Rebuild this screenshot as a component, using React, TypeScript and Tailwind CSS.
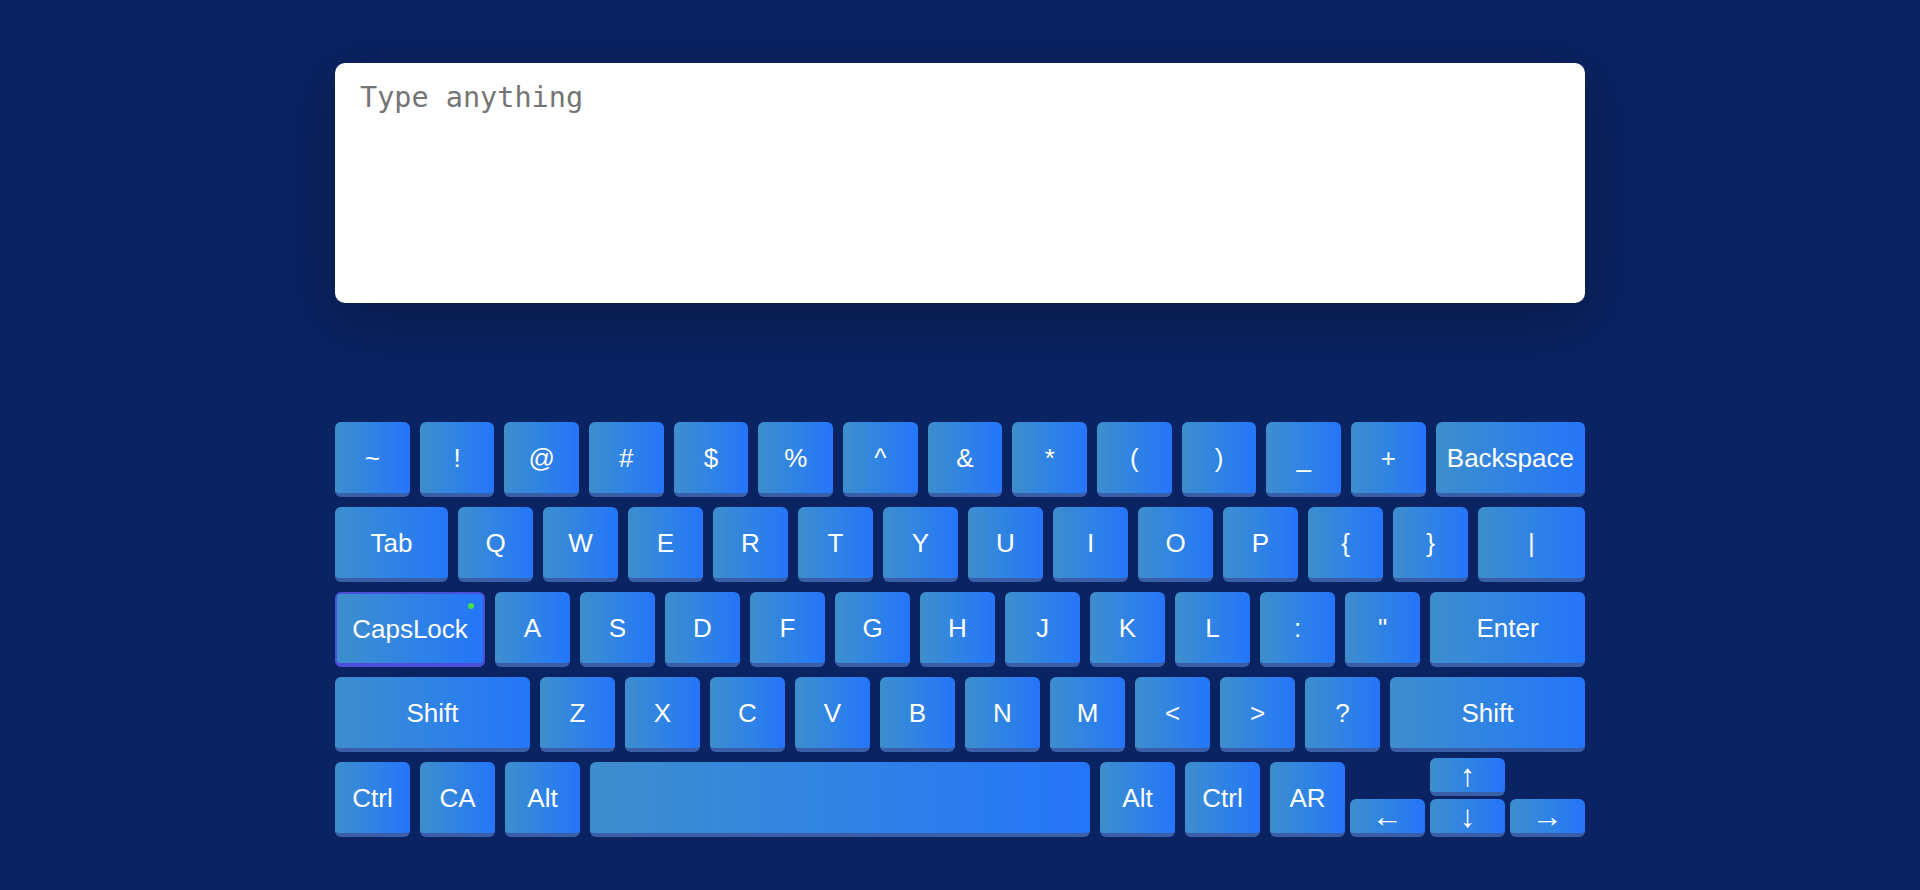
import React from "react";
import clsx from "clsx";

type KeyProps = {
  label: string;
  w?: string;
  h?: string;
  text?: string;
  active?: boolean;
  fixed?: boolean;
};

const Key: React.FC<KeyProps> = ({ label, w = "w-[75px]", h = "h-[75px]", text = "text-[26px]", active, fixed }) => {
  return (
    <div
      className={clsx(
        "relative flex items-center justify-center rounded-[6px] bg-linear-to-r from-[#3e8ecd] to-[#2575fa] leading-none text-white select-none",
        fixed ? "shrink-0" : "shrink",
        w,
        h,
        text,
        active ? "border-2 border-b-4 border-[#4b50d9]" : "border-b-4 border-[#3a5ea8]"
      )}
    >
      {label}
      {active && <span className="absolute top-[9px] right-[9px] h-[6px] w-[6px] rounded-full bg-[#44e04a]" />}
    </div>
  );
};

const row1 = ["~", "!", "@", "#", "$", "%", "^", "&", "*", "(", ")", "_", "+"];
const row2 = ["Q", "W", "E", "R", "T", "Y", "U", "I", "O", "P", "{", "}"];
const row3 = ["A", "S", "D", "F", "G", "H", "J", "K", "L", ":", '"'];
const row4 = ["Z", "X", "C", "V", "B", "N", "M", "<", ">", "?"];

const App: React.FC = () => {
  return (
    <div className="min-h-screen bg-[#0a2362] pt-[63px] font-['Liberation_Sans',Arial,sans-serif]">
      <div className="mx-auto w-[1250px]">
        {/* Text area */}
        <textarea
          placeholder="Type anything"
          className="block h-[240px] w-full resize-none rounded-[10px] bg-white px-[25px] pt-[14px] font-['DejaVu_Sans_Mono',monospace] text-[28.5px] text-[#333] outline-none placeholder:text-[#757575] shadow-[0_15px_60px_rgba(0,0,0,0.28)]"
        />

        {/* Keyboard */}
        <div className="mt-[119px] flex flex-col gap-[10px]">
          <div className="flex gap-[10px]">
            {row1.map((k) => (
              <Key key={k} label={k} />
            ))}
            <Key label="Backspace" w="w-[150px]" />
          </div>

          <div className="flex gap-[10px]">
            <Key label="Tab" w="w-[113px]" />
            {row2.map((k) => (
              <Key key={k} label={k} />
            ))}
            <Key label="|" w="flex-1" />
          </div>

          <div className="flex gap-[10px]">
            <Key label="CapsLock" w="w-[150px]" active />
            {row3.map((k) => (
              <Key key={k} label={k} />
            ))}
            <Key label="Enter" w="flex-1" />
          </div>

          <div className="flex gap-[10px]">
            <Key label="Shift" w="w-[195px]" />
            {row4.map((k) => (
              <Key key={k} label={k} />
            ))}
            <Key label="Shift" w="flex-1" />
          </div>

          <div className="flex h-[75px] items-end gap-[10px]">
            <Key label="Ctrl" />
            <Key label="CA" />
            <Key label="Alt" />
            <Key label="" w="w-[500px]" />
            <Key label="Alt" />
            <Key label="Ctrl" />
            <Key label="AR" />
            {/* Arrow cluster: up arrow sticks out a little above the row */}
            <div className="-ml-[5px] flex h-[75px] items-end gap-[5px]">
              <Key label="←" h="h-[38px]" text="text-[31px] pt-[1px]" fixed />
              <div className="flex h-[75px] flex-col justify-end gap-[3px]">
                <Key label="↑" h="h-[38px]" text="text-[31px]" fixed />
                <Key label="↓" h="h-[38px]" text="text-[31px] pt-[1px]" fixed />
              </div>
              <Key label="→" h="h-[38px]" text="text-[31px] pt-[1px]" fixed />
            </div>
          </div>
        </div>
      </div>
    </div>
  );
};

export default App;
